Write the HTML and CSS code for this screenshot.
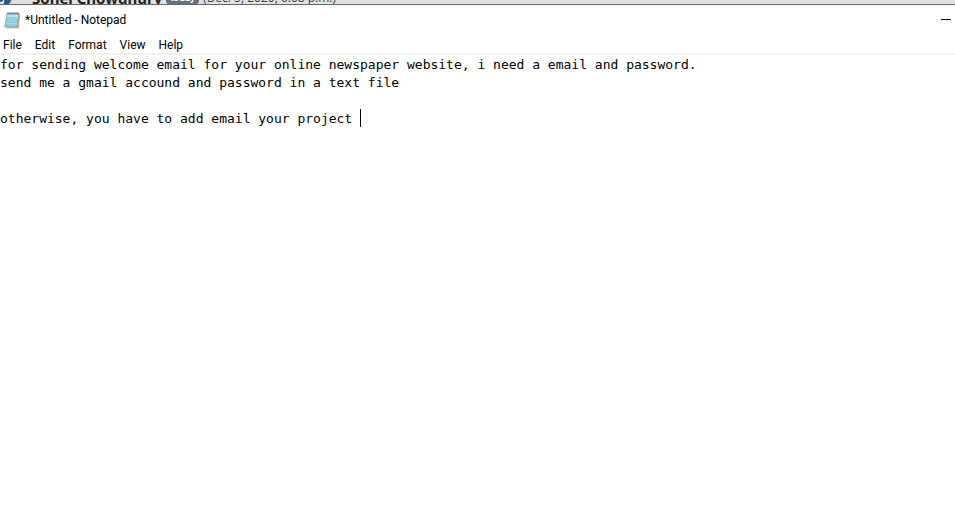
FILE: index.html
```html
<!DOCTYPE html>
<html lang="en">
<head>
<meta charset="utf-8">
<title>*Untitled - Notepad</title>
<link rel="stylesheet" href="styles.css">
</head>
<body>
<div class="behind">
  <div class="post">
    <svg class="avatar" viewBox="0 0 32 20" aria-hidden="true">
      <path d="M0 0H14Q13 15 6 18H0Z" fill="#245a86"/>
      <path d="M0 14Q3 14 4 11Q5 15 2 18H0z" fill="#dbe6ee"/>
    </svg>
    <strong class="author">Sohel Chowdhury</strong>
    <span class="tag">today</span>
    <span class="date">(Dec. 5, 2020, 6:08 p.m.)</span>
  </div>
</div>
<main class="window">
  <header class="titlebar">
    <svg class="app-icon" viewBox="0 0 16 18" aria-hidden="true">
      <path d="M3 2.500H15L13.500 16H.8Z" fill="#8fc9dc" stroke="#6d9aa8" stroke-width=".7"/>
      <path d="M3.300 3H14.500L14.100 6H2.900Z" fill="#c2e5ed"/>
      <path d="M2.700 7.500H13.500M2.400 10H13.200M2.100 12.500H13" stroke="#a9dbe8" stroke-width=".8"/>
      <path d="M15 3L15.500 4.500L14.300 16.800H2.500" fill="none" stroke="#a88d5d" stroke-width=".8"/>
      <path d="M4 1V4M6 1V4M8 1V4M10 1V4M12 1V4M14 1V4" stroke="#526b73" stroke-width=".8"/>
    </svg>
    <h1 class="title">*Untitled - Notepad</h1>
    <button class="minimize" type="button" aria-label="Minimize">
      <svg viewBox="0 0 10 10" aria-hidden="true"><path d="M0 4.500H10" stroke="#000"/></svg>
    </button>
  </header>
  <nav class="menu">
    <button type="button">File</button>
    <button type="button">Edit</button>
    <button type="button">Format</button>
    <button type="button">View</button>
    <button type="button">Help</button>
  </nav>
  <div class="editor">
    <textarea class="text" aria-label="Text editor" spellcheck="false">for sending welcome email for your online newspaper website, i need a email and password.
send me a gmail accound and password in a text file

otherwise, you have to add email your project </textarea>
    <span class="caret"></span>
  </div>
</main>
</body>
</html>
```
FILE: styles.css
```css
* { box-sizing: border-box; }

body {
  margin: 0;
  height: 100vh;
  display: flex;
  flex-direction: column;
  overflow: hidden;
  background: #fff;
  color: #000;
  font-family: "Segoe UI", Roboto, sans-serif;
  font-size: 12px;
}

.behind {
  height: 5px;
  flex: none;
  display: flex;
  align-items: flex-end;
  overflow: hidden;
  background: #e1e1e1;
  border-bottom: 1px solid #686868;
}

/* The row is scrolled up behind the window; only its foot shows. */
.post {
  display: flex;
  align-items: center;
  height: 20px;
  margin-bottom: -4px;
  line-height: 20px;
  white-space: nowrap;
}

.avatar { width: 32px; height: 20px; }

.author {
  font-family: "Noto Sans", sans-serif;
  font-size: 15px;
  color: #222;
}

.tag {
  margin: 0 4px;
  padding: 0 4px;
  border-radius: 3px;
  background: #66717b;
  color: #fff;
  font-size: 10px;
  font-weight: 700;
  line-height: 12px;
}

.date {
  color: #444;
  font-family: "Open Sans", sans-serif;
}

.window {
  flex: 1;
  display: flex;
  flex-direction: column;
}

.titlebar {
  display: flex;
  align-items: center;
  height: 30px;
  padding: 0 4px;
}

.app-icon { width: 16px; height: 18px; }

.title {
  margin: 0 auto 0 5px;
  font-size: 12px;
  font-weight: 400;
}

button {
  border: 0;
  padding: 0;
  background: none;
  color: inherit;
  font: inherit;
}

.minimize svg {
  display: block;
  width: 10px;
  height: 10px;
}

.menu {
  display: flex;
  gap: 13px;
  height: 20px;
  padding: 2px 3px 0;
  border-bottom: 2px solid #f0f0f0;
}

.editor {
  position: relative;
  flex: 1;
  display: flex;
  font-family: Consolas, "DejaVu Sans Mono", monospace;
  font-size: 13px;
  line-height: 18px;
}

.text {
  flex: 1;
  padding: 1px 0;
  border: 0;
  outline: 0;
  resize: none;
  background: transparent;
  color: inherit;
  font: inherit;
}

.caret {
  position: absolute;
  top: 54px;
  left: 46ch;
  width: 1px;
  height: 18px;
  background: #000;
}
```
